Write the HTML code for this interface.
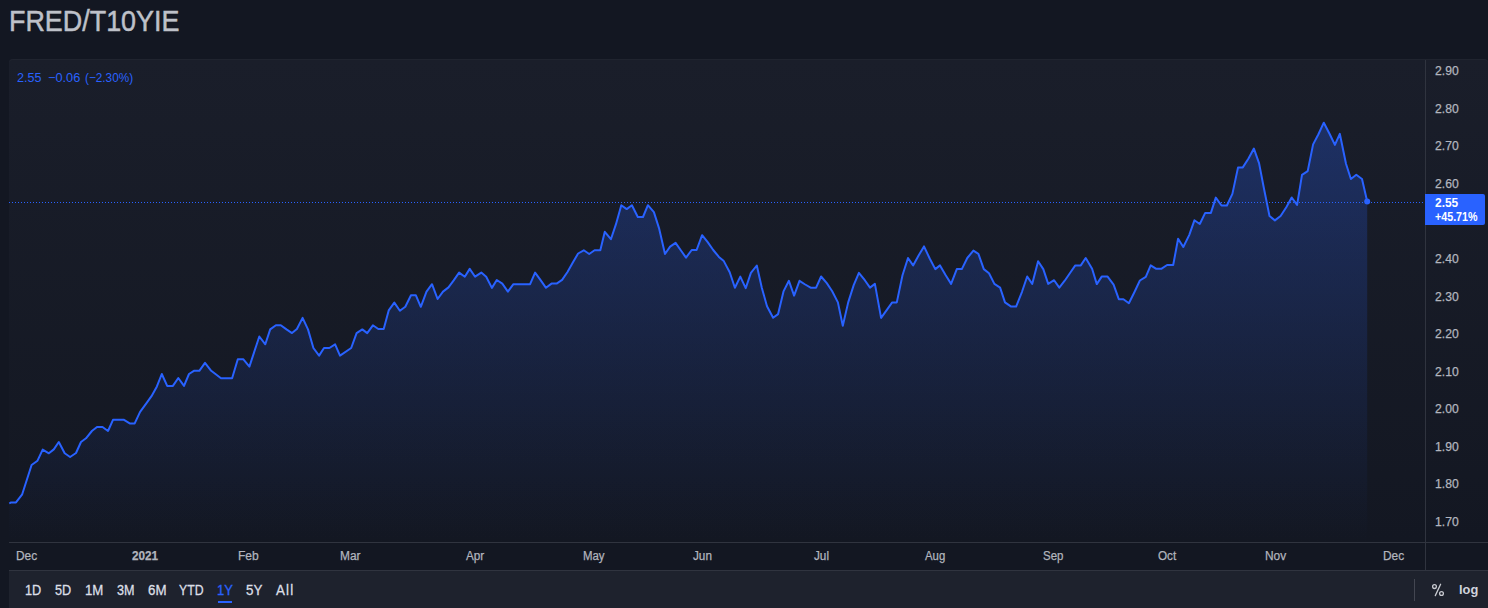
<!DOCTYPE html>
<html><head><meta charset="utf-8">
<style>
html,body{margin:0;padding:0;}
body{width:1488px;height:608px;overflow:hidden;background:#131722;position:relative;font-family:"Liberation Sans",sans-serif;}
.t{position:absolute;line-height:1;white-space:nowrap;transform-origin:0 0;}
.title{color:#bec1c9;-webkit-text-stroke:0.5px #bec1c9;}
.panel{position:absolute;left:9px;top:59px;width:1479px;height:483px;border-radius:4px 4px 0 0;background:linear-gradient(#1a1e2a,#131722);box-shadow:inset 0 1px 0 #20242f;}
.hline1{position:absolute;left:9px;top:542px;width:1479px;height:1px;background:#30343f;}
.hline2{position:absolute;left:9px;top:570px;width:1479px;height:1px;background:#30343f;}
.vline{position:absolute;left:1425px;top:60px;width:1px;height:510px;background:#30343f;}
.tbar{position:absolute;left:9px;top:571px;width:1479px;height:37px;background:#1e222d;}
svg{position:absolute;left:0;top:0;}
.pl{color:#b2b5be;-webkit-text-stroke:0.25px #b2b5be;}
.tl{color:#b2b5be;-webkit-text-stroke:0.25px #b2b5be;}
.bt{color:#dcdfe6;-webkit-text-stroke:0.3px currentColor;}
.bt.act{color:#2962ff;}
.uline{position:absolute;left:218px;top:601px;width:14px;height:2px;background:#2962ff;}
.lg{color:#2962ff;}
.plabel{position:absolute;left:1425px;top:194px;width:60px;height:31px;background:#2962ff;border-radius:0 2px 2px 0;}
.pw{color:#fff;}
.sep{position:absolute;left:1414px;top:579px;width:1px;height:22px;background:#434651;}
.tog{color:#d1d4dc;}
</style></head><body>
<div class="t title" style="left:9.0px;top:6.0px;font-size:29.5px;transform:scaleX(0.912);">FRED/T10YIE</div>
<div class="panel"></div>
<div class="tbar"></div>
<svg width="1488" height="608" viewBox="0 0 1488 608">
<defs><linearGradient id="ag" x1="0" y1="120" x2="0" y2="542" gradientUnits="userSpaceOnUse">
<stop offset="0" stop-color="#2962ff" stop-opacity="0.28"/><stop offset="1" stop-color="#2962ff" stop-opacity="0"/></linearGradient></defs>
<path d="M9.3,542 L9.3,503.5 L11.1,502.4 L16,502.4 L22.2,494.3 L31.6,465 L37.5,460.7 L42.7,449.6 L48.9,453.3 L53.8,449.4 L58.8,442 L64.7,453.3 L70.1,457 L76,453 L81,442 L86,438.3 L91.9,431 L97,427 L102.5,427 L108,431 L113,419.8 L123.6,419.7 L129.7,423.4 L134.7,423.4 L140.1,411.8 L146.5,403.1 L151.5,396.2 L156.9,386.4 L161.8,374 L167.2,385.9 L172.9,385.9 L178.3,378 L184,385.9 L189,374 L193.9,370.8 L199.3,370.8 L205,362.9 L211.2,370.8 L221,378.2 L232.1,378.2 L237.8,359.2 L243.2,359.2 L249.4,366.6 L259.3,336.5 L265.3,344.3 L270.2,329.4 L275.9,325.3 L280.8,325.3 L286.5,329.4 L292,333.1 L296.9,329 L302.6,317.9 L308,329.4 L313.4,348 L319.1,355.6 L324,348 L329.4,348 L335.1,344.3 L340,355.6 L351.2,348 L356.6,333.1 L362.3,329.4 L367.2,333.1 L372.9,325.3 L378.3,329 L383.7,329 L388.7,310.4 L394.3,302.6 L399.9,310.8 L405.3,306.8 L411,295.3 L415.9,295.3 L420.8,306.8 L426.5,291.6 L432,284.2 L437.6,299 L443,291.6 L448.5,287.4 L453.7,280.4 L459.1,272.6 L464.8,276.7 L469.7,268.9 L475.1,276.7 L481.3,272.6 L486.2,276.7 L491.9,287.9 L496.8,280 L502.3,283.7 L507.9,291.6 L513.4,284.2 L530.1,284.2 L535.1,272.6 L540.4,279.9 L546,287.8 L551.5,283.6 L556.6,283.6 L562.1,279.9 L567.5,272 L572.7,262.7 L578.1,253.5 L583.8,250.3 L589.2,254 L594.6,250.3 L600.3,250.3 L604.8,231.8 L610.9,239.2 L615.9,224.4 L621.3,205.2 L626.7,209.1 L631.9,205.2 L637.8,217 L643,217 L647.9,205.2 L653.9,212.1 L659,228.1 L665,254 L670.1,246.6 L675.6,242.9 L680.6,250 L686,257.6 L691.7,250 L696.6,250 L702.1,235.2 L707.7,242.1 L713.2,250 L718.9,256.9 L723.8,261.1 L729.7,272.2 L734.9,287.7 L740.3,276.6 L745.7,288.2 L750.9,272.9 L756.8,265.5 L761.8,287.7 L767,306.2 L773.1,317.8 L778.1,314.1 L783.5,291.4 L788.9,280.8 L794.1,295.6 L799.5,280.8 L805.2,284.5 L810.6,287.7 L816.1,287.7 L821.1,276.5 L826.8,283.1 L832.2,291.3 L837.9,302.4 L842.8,325.8 L848.2,302.4 L853.7,285.1 L858.9,272.8 L864.8,280.2 L870,287.6 L874.9,283.9 L881.1,317.9 L886.5,310.3 L892.2,302.4 L896.8,302.4 L902.5,275.3 L908,258 L913.1,265.4 L918.6,255.5 L924,246.4 L929.7,258.5 L935.3,269.1 L940,265.4 L945.7,275.3 L951.1,283.9 L956.8,269.1 L961.8,269.1 L967.3,258 L973.4,250.6 L978.4,253.8 L983.8,269.1 L989,273.3 L994.4,283.9 L1000.1,287.6 L1005,302.4 L1011.2,306.6 L1016.1,306.6 L1022,291.8 L1027.2,276.5 L1032.2,283.9 L1038.1,261.2 L1043.3,269.1 L1048.2,283.9 L1054.1,280.2 L1059.3,287.6 L1064.7,280.7 L1070.2,272.8 L1075.3,265.4 L1080.8,265.4 L1085.7,258 L1092.1,268.7 L1096.8,284.1 L1101.7,276.6 L1107.6,276.6 L1113.6,284.7 L1118.8,299.2 L1123.4,299.2 L1128.9,303.2 L1134.6,291.7 L1139.9,280.5 L1145.8,276.8 L1150.7,265.3 L1155.9,268.7 L1161.6,268.7 L1167.1,265 L1173.2,265 L1178.1,238.8 L1183.3,247 L1189.2,235.1 L1194.4,220.3 L1199.8,224 L1205.2,212.9 L1210.9,212.9 L1215.8,197.6 L1221.5,205.5 L1226.9,205.5 L1232.4,193.9 L1238,167.6 L1242.8,167.4 L1248.5,158.5 L1253.9,148.6 L1259.1,163.4 L1264,188.8 L1269.5,216 L1274.9,220.4 L1280.6,216 L1286.3,207.3 L1291.7,197.5 L1297.1,204.9 L1302,174.8 L1307.7,171.1 L1313.1,144.4 L1318.3,134.5 L1323.8,122.7 L1329.9,134.5 L1334.9,144.9 L1339.8,133.8 L1346,163.7 L1350.9,179 L1356.3,174.8 L1362,179 L1367.2,201.5 L1367.2,542 Z" fill="url(#ag)"/>
<line x1="9" y1="202.5" x2="1425" y2="202.5" stroke="#2962ff" stroke-width="1" stroke-dasharray="1 2"/>
<polyline points="9.3,503.5 11.1,502.4 16,502.4 22.2,494.3 31.6,465 37.5,460.7 42.7,449.6 48.9,453.3 53.8,449.4 58.8,442 64.7,453.3 70.1,457 76,453 81,442 86,438.3 91.9,431 97,427 102.5,427 108,431 113,419.8 123.6,419.7 129.7,423.4 134.7,423.4 140.1,411.8 146.5,403.1 151.5,396.2 156.9,386.4 161.8,374 167.2,385.9 172.9,385.9 178.3,378 184,385.9 189,374 193.9,370.8 199.3,370.8 205,362.9 211.2,370.8 221,378.2 232.1,378.2 237.8,359.2 243.2,359.2 249.4,366.6 259.3,336.5 265.3,344.3 270.2,329.4 275.9,325.3 280.8,325.3 286.5,329.4 292,333.1 296.9,329 302.6,317.9 308,329.4 313.4,348 319.1,355.6 324,348 329.4,348 335.1,344.3 340,355.6 351.2,348 356.6,333.1 362.3,329.4 367.2,333.1 372.9,325.3 378.3,329 383.7,329 388.7,310.4 394.3,302.6 399.9,310.8 405.3,306.8 411,295.3 415.9,295.3 420.8,306.8 426.5,291.6 432,284.2 437.6,299 443,291.6 448.5,287.4 453.7,280.4 459.1,272.6 464.8,276.7 469.7,268.9 475.1,276.7 481.3,272.6 486.2,276.7 491.9,287.9 496.8,280 502.3,283.7 507.9,291.6 513.4,284.2 530.1,284.2 535.1,272.6 540.4,279.9 546,287.8 551.5,283.6 556.6,283.6 562.1,279.9 567.5,272 572.7,262.7 578.1,253.5 583.8,250.3 589.2,254 594.6,250.3 600.3,250.3 604.8,231.8 610.9,239.2 615.9,224.4 621.3,205.2 626.7,209.1 631.9,205.2 637.8,217 643,217 647.9,205.2 653.9,212.1 659,228.1 665,254 670.1,246.6 675.6,242.9 680.6,250 686,257.6 691.7,250 696.6,250 702.1,235.2 707.7,242.1 713.2,250 718.9,256.9 723.8,261.1 729.7,272.2 734.9,287.7 740.3,276.6 745.7,288.2 750.9,272.9 756.8,265.5 761.8,287.7 767,306.2 773.1,317.8 778.1,314.1 783.5,291.4 788.9,280.8 794.1,295.6 799.5,280.8 805.2,284.5 810.6,287.7 816.1,287.7 821.1,276.5 826.8,283.1 832.2,291.3 837.9,302.4 842.8,325.8 848.2,302.4 853.7,285.1 858.9,272.8 864.8,280.2 870,287.6 874.9,283.9 881.1,317.9 886.5,310.3 892.2,302.4 896.8,302.4 902.5,275.3 908,258 913.1,265.4 918.6,255.5 924,246.4 929.7,258.5 935.3,269.1 940,265.4 945.7,275.3 951.1,283.9 956.8,269.1 961.8,269.1 967.3,258 973.4,250.6 978.4,253.8 983.8,269.1 989,273.3 994.4,283.9 1000.1,287.6 1005,302.4 1011.2,306.6 1016.1,306.6 1022,291.8 1027.2,276.5 1032.2,283.9 1038.1,261.2 1043.3,269.1 1048.2,283.9 1054.1,280.2 1059.3,287.6 1064.7,280.7 1070.2,272.8 1075.3,265.4 1080.8,265.4 1085.7,258 1092.1,268.7 1096.8,284.1 1101.7,276.6 1107.6,276.6 1113.6,284.7 1118.8,299.2 1123.4,299.2 1128.9,303.2 1134.6,291.7 1139.9,280.5 1145.8,276.8 1150.7,265.3 1155.9,268.7 1161.6,268.7 1167.1,265 1173.2,265 1178.1,238.8 1183.3,247 1189.2,235.1 1194.4,220.3 1199.8,224 1205.2,212.9 1210.9,212.9 1215.8,197.6 1221.5,205.5 1226.9,205.5 1232.4,193.9 1238,167.6 1242.8,167.4 1248.5,158.5 1253.9,148.6 1259.1,163.4 1264,188.8 1269.5,216 1274.9,220.4 1280.6,216 1286.3,207.3 1291.7,197.5 1297.1,204.9 1302,174.8 1307.7,171.1 1313.1,144.4 1318.3,134.5 1323.8,122.7 1329.9,134.5 1334.9,144.9 1339.8,133.8 1346,163.7 1350.9,179 1356.3,174.8 1362,179 1367.2,201.5" fill="none" stroke="#2962ff" stroke-width="2" stroke-linejoin="round" stroke-linecap="butt"/>
<circle cx="1367.2" cy="201.5" r="3" fill="#2962ff"/>
</svg>
<div class="hline1"></div>
<div class="hline2"></div>
<div class="vline"></div>
<div class="t lg" style="left:17.3px;top:72.1px;font-size:12.5px;transform:scaleX(1.008);">2.55</div>
<div class="t lg" style="left:48.0px;top:72.1px;font-size:12.5px;transform:scaleX(1.02);">&#8722;0.06</div>
<div class="t lg" style="left:84.7px;top:72.1px;font-size:12.5px;transform:scaleX(0.942);">(&#8722;2.30%)</div>
<div class="t pl" style="left:1434.9px;top:65.3px;font-size:12.0px;transform:scaleX(1.013)">2.90</div>
<div class="t pl" style="left:1434.9px;top:102.85px;font-size:12.0px;transform:scaleX(1.013)">2.80</div>
<div class="t pl" style="left:1434.9px;top:140.4px;font-size:12.0px;transform:scaleX(1.013)">2.70</div>
<div class="t pl" style="left:1434.9px;top:177.95px;font-size:12.0px;transform:scaleX(1.013)">2.60</div>
<div class="t pl" style="left:1434.9px;top:253.05px;font-size:12.0px;transform:scaleX(1.013)">2.40</div>
<div class="t pl" style="left:1434.9px;top:290.6px;font-size:12.0px;transform:scaleX(1.013)">2.30</div>
<div class="t pl" style="left:1434.9px;top:328.15px;font-size:12.0px;transform:scaleX(1.013)">2.20</div>
<div class="t pl" style="left:1434.9px;top:365.7px;font-size:12.0px;transform:scaleX(1.013)">2.10</div>
<div class="t pl" style="left:1434.9px;top:403.25px;font-size:12.0px;transform:scaleX(1.013)">2.00</div>
<div class="t pl" style="left:1434.9px;top:440.8px;font-size:12.0px;transform:scaleX(1.013)">1.90</div>
<div class="t pl" style="left:1434.9px;top:478.35px;font-size:12.0px;transform:scaleX(1.013)">1.80</div>
<div class="t pl" style="left:1434.9px;top:515.9px;font-size:12.0px;transform:scaleX(1.013)">1.70</div>
<div class="plabel"></div>
<div class="t pw" style="left:1435.0px;top:196.9px;font-size:12.5px;transform:scaleX(0.954);font-weight:bold;">2.55</div>
<div class="t pw" style="left:1435.0px;top:211.1px;font-size:12.5px;transform:scaleX(0.856);font-weight:bold;">+45.71%</div>
<div class="t tl" style="left:16.0px;top:549.9px;font-size:12.5px;transform:scaleX(0.952);">Dec</div>
<div class="t tl" style="left:132.1px;top:549.9px;font-size:12.5px;transform:scaleX(0.939);font-weight:bold;">2021</div>
<div class="t tl" style="left:237.8px;top:549.9px;font-size:12.5px;transform:scaleX(0.965);">Feb</div>
<div class="t tl" style="left:340.25px;top:549.9px;font-size:12.5px;transform:scaleX(0.952);">Mar</div>
<div class="t tl" style="left:466.25px;top:549.9px;font-size:12.5px;transform:scaleX(0.938);">Apr</div>
<div class="t tl" style="left:583.0px;top:549.9px;font-size:12.5px;transform:scaleX(0.913);">May</div>
<div class="t tl" style="left:693.25px;top:549.9px;font-size:12.5px;transform:scaleX(0.938);">Jun</div>
<div class="t tl" style="left:814.0px;top:549.9px;font-size:12.5px;transform:scaleX(0.938);">Jul</div>
<div class="t tl" style="left:924.75px;top:549.9px;font-size:12.5px;transform:scaleX(0.909);">Aug</div>
<div class="t tl" style="left:1043.0px;top:549.9px;font-size:12.5px;transform:scaleX(0.917);">Sep</div>
<div class="t tl" style="left:1158.0px;top:549.9px;font-size:12.5px;transform:scaleX(0.938);">Oct</div>
<div class="t tl" style="left:1264.5px;top:549.9px;font-size:12.5px;transform:scaleX(0.952);">Nov</div>
<div class="t tl" style="left:1383.25px;top:549.9px;font-size:12.5px;transform:scaleX(0.952);">Dec</div>
<div class="t bt" style="left:24.75px;top:582.8px;font-size:14.0px;transform:scaleX(0.909);">1D</div>
<div class="t bt" style="left:54.7px;top:582.8px;font-size:14.0px;transform:scaleX(0.906);">5D</div>
<div class="t bt" style="left:84.9px;top:582.8px;font-size:14.0px;transform:scaleX(0.944);">1M</div>
<div class="t bt" style="left:116.5px;top:582.8px;font-size:14.0px;transform:scaleX(0.9);">3M</div>
<div class="t bt" style="left:147.7px;top:582.8px;font-size:14.0px;transform:scaleX(0.95);">6M</div>
<div class="t bt" style="left:178.7px;top:582.8px;font-size:14.0px;transform:scaleX(0.875);">YTD</div>
<div class="t bt act" style="left:216.9px;top:582.8px;font-size:14.0px;transform:scaleX(0.925);">1Y</div>
<div class="t bt" style="left:245.9px;top:582.8px;font-size:14.0px;transform:scaleX(0.956);">5Y</div>
<div class="t bt" style="left:275.9px;top:583.1px;font-size:14.0px;transform:scaleX(0.95);letter-spacing:1.3px;">All</div>
<div class="uline"></div>
<div class="sep"></div>
<svg class="pcts" width="1488" height="608" viewBox="0 0 1488 608" style="position:absolute;left:0;top:0"><g fill="none" stroke="#c8cad0" stroke-width="1.3"><circle cx="1434.5" cy="586.6" r="1.9"/><circle cx="1441.5" cy="593.5" r="1.9"/><line x1="1440.6" y1="584.3" x2="1435.3" y2="595.6" stroke-linecap="round"/></g></svg>
<div class="t tog" style="left:1458.7px;top:582.9px;font-size:13.5px;transform:scaleX(0.95);font-weight:bold;">log</div>
</body></html>
